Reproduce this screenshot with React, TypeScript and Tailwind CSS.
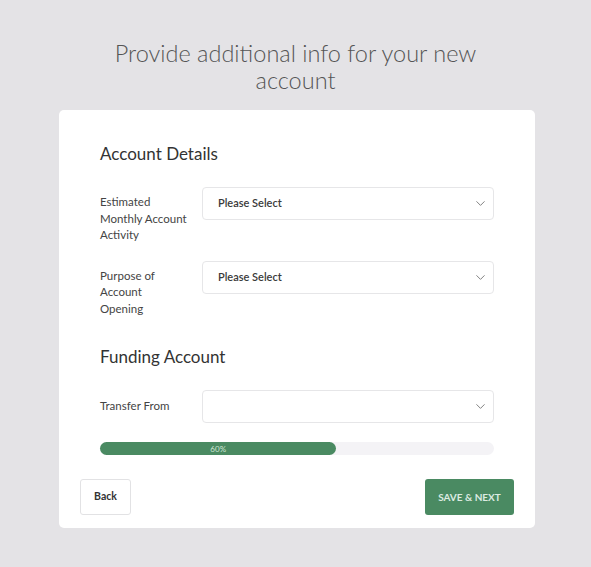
import { ChevronDown } from "lucide-react"

function SelectBox({ value }: { value?: string }) {
  return (
    <div className="flex h-[33px] w-[292px] items-center justify-between rounded-[4px] border border-[#e6e6e8] bg-white pl-[15px] pr-[5px]">
      <span className="text-[11px] font-semibold text-[#3a3a3a]">{value ?? ""}</span>
      <ChevronDown className="h-[15px] w-[15px] text-[#6f6f6f]" strokeWidth={1.4} />
    </div>
  )
}

function FieldRow({ label, value }: { label: string[]; value?: string }) {
  return (
    <div className="flex items-start">
      <div
        className={`w-[102px] text-[11.5px] leading-[16.5px] text-[#444] ${label.length > 1 ? "pt-[7px]" : "pt-[8px]"}`}
      >
        {label.map((l) => (
          <div key={l}>{l}</div>
        ))}
      </div>
      <SelectBox value={value} />
    </div>
  )
}

export default function App() {
  const progress = 60

  return (
    <div
      className="min-h-screen bg-[#e4e3e6] pt-[40px]"
      style={{ fontFamily: "Lato, 'Open Sans', sans-serif" }}
    >
      <h1 className="mx-auto w-[390px] text-center text-[23.5px] font-light leading-[27px] text-[#555]">
        Provide additional info for your new account
      </h1>

      <div className="ml-[59px] mt-[16px] w-[476px] rounded-[5px] bg-white px-[21px] pb-[13px] pt-[32px]">
        <div className="px-[20px]">
          {/* Account Details */}
          <h2 className="text-[17px] leading-[24px] text-[#333]">Account Details</h2>
          <div className="mt-[21px]">
            <FieldRow label={["Estimated", "Monthly Account", "Activity"]} value="Please Select" />
          </div>
          <div className="mt-[17px]">
            <FieldRow label={["Purpose of", "Account", "Opening"]} value="Please Select" />
          </div>

          {/* Funding Account */}
          <h2 className="mt-[28px] text-[17px] leading-[24px] text-[#333]">Funding Account</h2>
          <div className="mt-[21px]">
            <FieldRow label={["Transfer From"]} />
          </div>

          {/* Progress */}
          <div className="mt-[19px] h-[13px] w-full rounded-full bg-[#f4f3f6]">
            <div
              className="flex h-full items-center justify-center rounded-full bg-[#4a8a62] text-[8px] leading-none text-[#cfe6d6]"
              style={{ width: `${progress}%` }}
            >
              {progress}%
            </div>
          </div>
        </div>

        <div className="mt-[24px] flex items-center justify-between">
          <button className="h-[36px] w-[51px] rounded-[3px] border border-[#e2e2e4] bg-white text-[10.5px] font-bold text-[#333]">
            Back
          </button>
          <button className="h-[36px] w-[89px] rounded-[3px] bg-[#4a8a62] text-[10px] font-bold uppercase text-[#dcebe1]">
            Save &amp; Next
          </button>
        </div>
      </div>
    </div>
  )
}
